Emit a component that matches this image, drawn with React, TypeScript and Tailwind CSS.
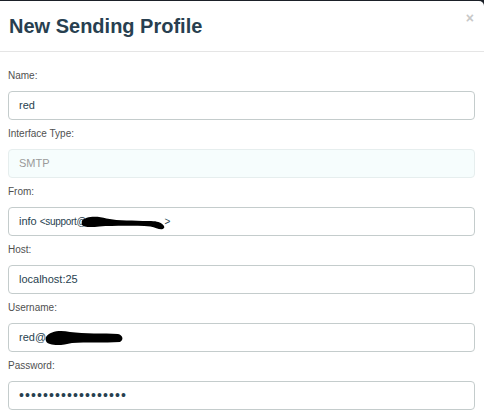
import React from 'react';

interface IfieldProps {
  label: string;
  children: React.ReactNode;
  disabled?: boolean;
}

const Redaction: React.FC<{ width: number; variant: 'from' | 'user' }> = ({ width, variant }) => {
  if (variant === 'from') {
    return (
      <svg width={width} height="20" viewBox="0 0 100 20" className="inline-block align-middle -ml-[6px]">
        <path
          d="M2 9 C 6 3, 20 3, 30 6 C 45 9, 60 8, 78 9 C 86 9, 90 10, 93 12 C 96 14, 97 17, 94 18 C 90 19, 86 16, 80 15 C 62 14, 40 14, 22 15 C 12 16, 4 16, 2 13 Z"
          fill="#000"
        />
      </svg>
    );
  }
  return (
    <svg width={width} height="18" viewBox="0 0 80 18" className="inline-block align-middle -ml-[2px]">
      <path
        d="M2 8 C 6 2, 16 1, 26 3 C 40 5, 60 4, 74 5 C 79 6, 80 11, 76 13 C 60 14, 42 13, 28 14 C 20 16, 12 17, 6 15 C 2 14, 1 11, 2 8 Z"
        fill="#000"
      />
    </svg>
  );
};

const Field: React.FC<IfieldProps> = ({ label, children, disabled }) => (
  <div className="mb-[7px]">
    <label className="block text-[10px] leading-[14px] text-[#505050] mb-[8px]">{label}</label>
    <div
      className={
        disabled
          ? 'h-[29px] flex items-center pl-[10px] rounded-[4px] border border-[#e6eeee] bg-[#f6fdfd] text-[11px] text-[#9a9a9a] whitespace-nowrap overflow-hidden'
          : 'h-[29px] flex items-center pl-[10px] rounded-[4px] border border-[#c4cccc] bg-white text-[11px] text-[#283f50] whitespace-nowrap overflow-hidden'
      }
    >
      {children}
    </div>
  </div>
);

const App: React.FC = () => {
  return (
    <div className="w-[484px] h-[420px] overflow-hidden bg-[#1b2028] pt-px font-['Liberation_Sans',Arial,sans-serif]">
      <div className="h-full w-[484px] bg-white rounded-tr-[5px]">
        <div className="h-[51px] border-b border-[#e5e5e5] flex items-start justify-between pl-[9px] pr-[10px] pt-[11px]">
          <h4 className="text-[20px] leading-[28px] font-bold text-[#283f50]">New Sending Profile</h4>
          <button className="text-[14px] leading-[14px] font-bold text-[#c8c8c8] -mt-[1px]">×</button>
        </div>
        <div className="pl-[8px] pr-[9px] pt-[17px]">
          <Field label="Name:">red</Field>
          <Field label="Interface Type:" disabled>
            SMTP
          </Field>
          <Field label="From:">
            <span>info&nbsp;</span>
            <span className="text-[10px] tracking-[-0.3px]">&lt;support@</span>
            <Redaction width={88} variant="from" />
            <span className="-ml-[4px] text-[10px]">&gt;</span>
          </Field>
          <Field label="Host:">localhost:25</Field>
          <Field label="Username:">
            <span>red@</span>
            <Redaction width={80} variant="user" />
          </Field>
          <Field label="Password:">
            <span className="tracking-[1.1px] text-[14px] text-[#283f50]">••••••••••••••••••</span>
          </Field>
        </div>
      </div>
    </div>
  );
};

export default App;
